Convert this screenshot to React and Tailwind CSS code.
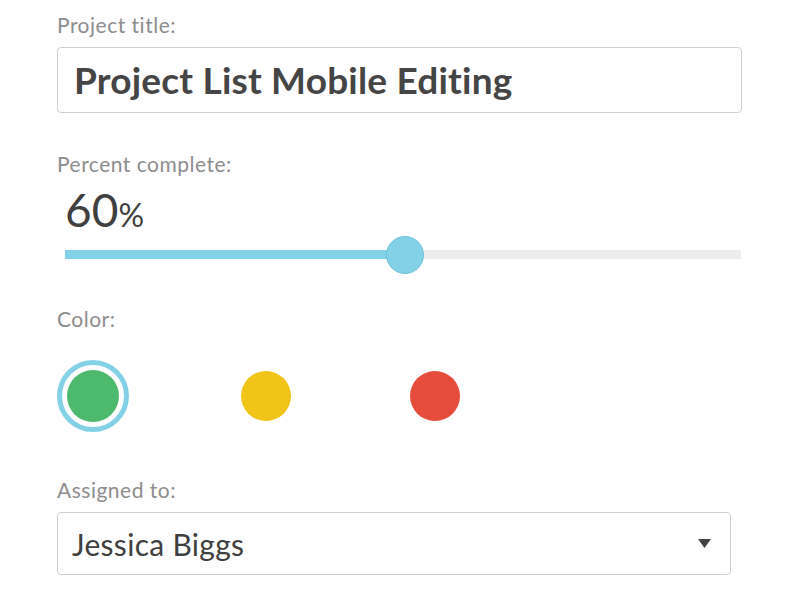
import React from 'react';

const swatches = [
    { name: 'green', color: 'bg-[#4cb96c]', gap: 'ml-0' },
    { name: 'yellow', color: 'bg-[#f1c418]', gap: 'ml-[101px]' },
    { name: 'red', color: 'bg-[#e54c3c]', gap: 'ml-[97px]' },
];

export default function App() {
    const selected = 'green';

    return (
        <div className="w-[800px] h-[600px] bg-white pl-[57px] overflow-hidden font-['Lato','Noto_Sans',sans-serif]">
            <label className="block pt-[12px] text-[21px] leading-[25px] tracking-[0.5px] text-[#8d8d8d]">Project title:</label>
            <div className="mt-[10px] w-[685px] h-[66px] border border-[#cfcfcf] rounded-[4px] flex items-center px-[16px]">
                <span className="text-[37px] font-bold text-[#454545] leading-[44px] tracking-[0.2px]">Project List Mobile Editing</span>
            </div>

            <label className="block mt-[38px] text-[21px] leading-[25px] tracking-[0.5px] text-[#8d8d8d]">Percent complete:</label>
            <div className="mt-[11px] ml-[8px] h-[46px] leading-[46px] text-[#3f3f3f]">
                <span className="text-[46px] font-normal">60</span>
                <span className="text-[32px]">%</span>
            </div>

            <div className="relative mt-[17px] ml-[8px] w-[676px] h-[9px] bg-[#ececec]">
                <div className="h-full w-[340px] bg-[#83d1e6]" />
                <div className="absolute left-[321px] top-[-14px] w-[38px] h-[38px] rounded-full bg-[#83d1e6] border border-[#6ec3db]" />
            </div>

            <label className="block mt-[47px] text-[21px] leading-[25px] tracking-[0.5px] text-[#8d8d8d]">Color:</label>
            <div className="mt-[29px] flex items-center">
                {swatches.map((s) =>
                    s.name === selected ? (
                        <div key={s.name} className={`w-[72px] h-[72px] rounded-full border-[5px] border-[#83d1e6] p-[5px] ${s.gap}`}>
                            <div className={`w-full h-full rounded-full ${s.color}`} />
                        </div>
                    ) : (
                        <div key={s.name} className={`w-[72px] h-[72px] flex items-center justify-center ${s.gap}`}>
                            <div className={`w-[50px] h-[50px] rounded-full ${s.color}`} />
                        </div>
                    )
                )}
            </div>

            <label className="block mt-[45px] text-[21px] leading-[25px] tracking-[0.5px] text-[#8d8d8d]">Assigned to:</label>
            <div className="mt-[10px] w-[674px] h-[63px] border border-[#cfcfcf] rounded-[4px] flex items-center justify-between pl-[14px] pr-[19px]">
                <span className="text-[30px] text-[#3f3f3f] leading-[36px] tracking-[0.3px]">Jessica Biggs</span>
                <svg width="13" height="9" viewBox="0 0 13 9">
                    <path d="M0 0 H13 L6.5 9 Z" fill="#444444" />
                </svg>
            </div>
        </div>
    );
}
